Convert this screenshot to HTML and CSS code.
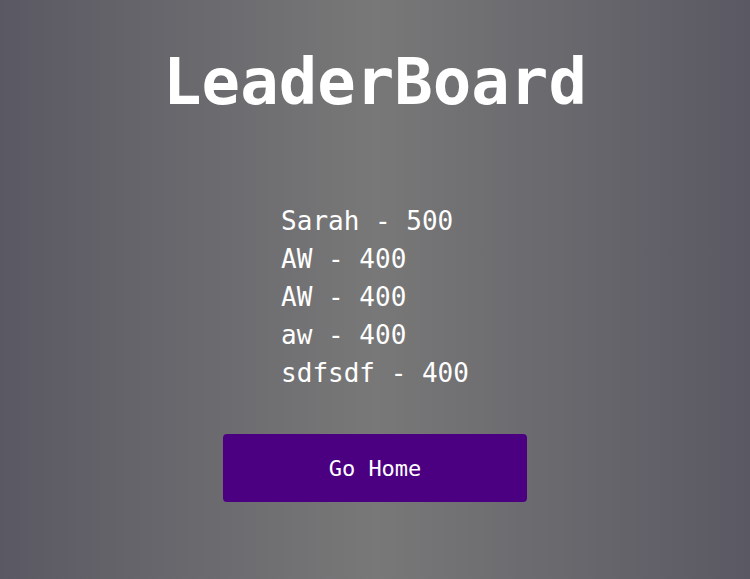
FILE: index.html
```html
<!DOCTYPE html>
<html lang="en">
<head>
<meta charset="utf-8">
<title>LeaderBoard</title>
<link rel="stylesheet" href="styles.css">
</head>
<body>
<main class="page">
  <h1 class="title">LeaderBoard</h1>
  <ul class="scores">
    <li>Sarah - 500</li>
    <li>AW - 400</li>
    <li>AW - 400</li>
    <li>aw - 400</li>
    <li>sdfsdf - 400</li>
  </ul>
  <button class="home-btn" type="button">Go Home</button>
</main>
</body>
</html>
```

FILE: styles.css
```css
html, body {
  margin: 0;
  padding: 0;
  height: 100%;
}
body {
  background: linear-gradient(to right, #5a5963 0%, #787878 50%, #5a5963 100%);
  color: #ffffff;
  font-family: "DejaVu Sans Mono", "Liberation Mono", monospace;
}
.page {
  display: flex;
  flex-direction: column;
  align-items: center;
  padding-top: 44px;
}
.title {
  margin: 0;
  font-size: 64px;
  line-height: 76px;
  font-weight: bold;
}
.scores {
  list-style: none;
  margin: 82px 0 0 0;
  padding: 0;
  font-size: 26px;
  line-height: 38px;
}
.home-btn {
  margin-top: 42px;
  width: 304px;
  height: 68px;
  border: none;
  border-radius: 4px;
  background: #4b0082;
  color: #ffffff;
  font-family: "DejaVu Sans Mono", "Liberation Mono", monospace;
  font-size: 22px;
  cursor: pointer;
}
```
